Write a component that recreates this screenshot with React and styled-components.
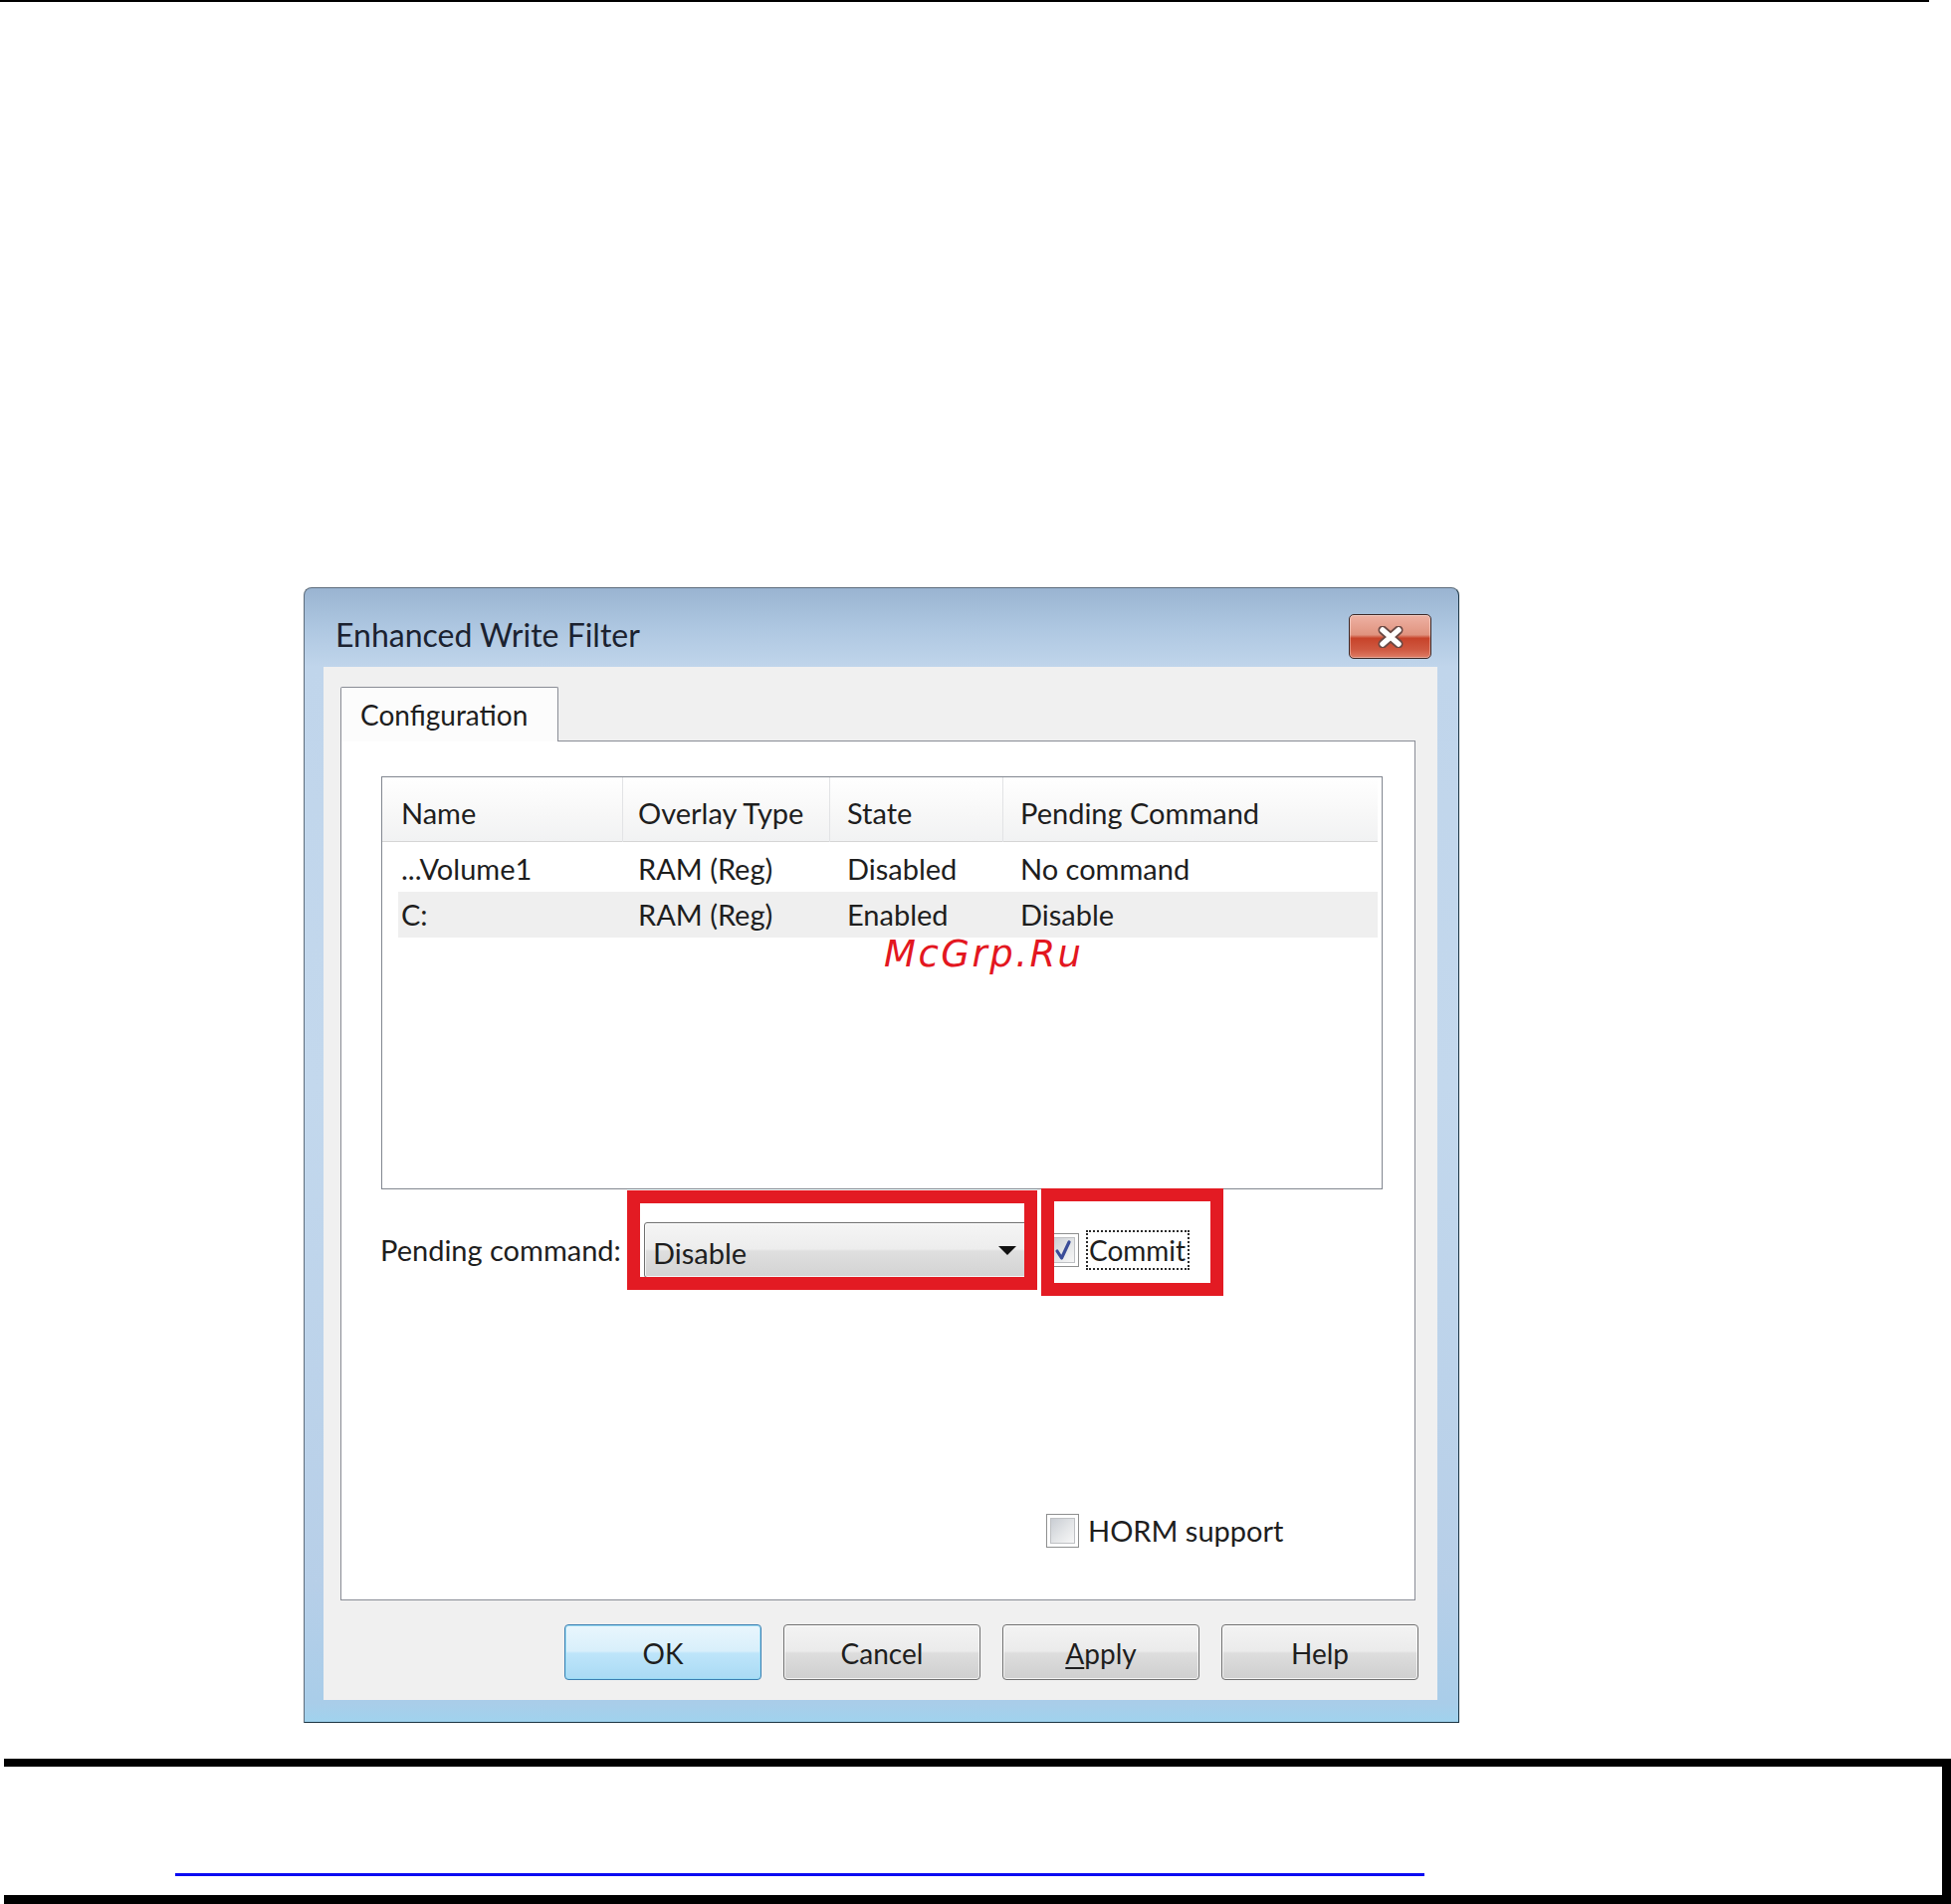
import React from "react";
import styled, { createGlobalStyle } from "styled-components";

const GlobalStyle = createGlobalStyle`
  html, body { margin: 0; padding: 0; background: #ffffff; }
  body { font-family: Lato, "Noto Sans", sans-serif; }
  #root { width: 1960px; height: 1913px; overflow: hidden; }
`;

const Page = styled.div`
  width: 1960px;
  height: 1913px;
  overflow: hidden;
  background: #fff;
`;

const TopRule = styled.div`
  width: 1938px;
  height: 2px;
  background: #000;
`;

const Window = styled.div`
  margin: 588px 0 0 305px;
  width: 1161px;
  height: 1141px;
  box-sizing: border-box;
  display: flex;
  flex-direction: column;
  padding: 0 21px 22px 19px;
  border: 1px solid;
  border-color: #5e6d7c #1a3342 #1a3342 #5e6d7c;
  border-radius: 8px 8px 0 0;
  background: linear-gradient(
    180deg,
    #9ab4d1 0px,
    #aec7e1 40px,
    #c0d5eb 79px,
    #c3d8ed 500px,
    #b7cfe8 1000px,
    #a9cde9 1120px,
    #9fd3ee 1141px
  );
`;

const TitleBar = styled.div`
  flex: none;
  display: flex;
  align-items: flex-start;
  height: 79px;
  margin: 0 -21px 0 -19px;
  padding: 0 27px 0 31px;
`;

const Title = styled.div`
  margin-top: 31px;
  font-size: 32px;
  line-height: 32px;
  color: #1b2230;
  white-space: nowrap;
`;

const CloseButton = styled.div`
  margin-left: auto;
  margin-top: 26px;
  width: 83px;
  height: 45px;
  box-sizing: border-box;
  border: 1px solid #3d2826;
  border-radius: 5px;
  background: linear-gradient(
    180deg,
    #eeb2a4 0%,
    #e0937f 46%,
    #c7432a 54%,
    #cf5840 80%,
    #df7d66 100%
  );
  box-shadow: inset 0 0 0 1px rgba(255, 255, 255, 0.35);
  display: flex;
  align-items: center;
  justify-content: center;
`;

const Content = styled.div`
  flex: 1;
  background: #f0f0f0;
  display: flex;
  flex-direction: column;
  padding: 20px 22px 20px 17px;
  box-sizing: border-box;
`;

const TabStrip = styled.div`
  flex: none;
  display: flex;
  position: relative;
  z-index: 1;
  margin-bottom: -1px;
`;

const Tab = styled.div`
  width: 219px;
  height: 55px;
  box-sizing: border-box;
  border: 1px solid #898c95;
  border-bottom: none;
  border-radius: 2px 2px 0 0;
  background: #fcfcfc;
  padding: 13px 0 0 19px;
  font-size: 28px;
  line-height: 28px;
  color: #1e1e1e;
  white-space: nowrap;
`;

const Panel = styled.div`
  position: relative;
  flex: none;
  height: 864px;
  box-sizing: border-box;
  border: 1px solid #898c95;
  background: #fff;
  display: flex;
  flex-direction: column;
  padding: 35px 32px 0 40px;
`;

const ListView = styled.div`
  position: relative;
  flex: none;
  height: 415px;
  box-sizing: border-box;
  border: 1px solid #828790;
  background: #fff;
  padding-right: 4px;
`;

const Header = styled.div`
  display: grid;
  grid-template-columns: 242px 208px 174px 1fr;
  height: 65px;
  box-sizing: border-box;
  background: linear-gradient(180deg, #ffffff 0%, #f7f7f7 60%, #f1f2f3 100%);
  border-bottom: 1px solid #d5d5d5;
`;

const HeaderCell = styled.div`
  box-sizing: border-box;
  padding: 6px 0 0 ${(p) => p.$pad}px;
  font-size: 29px;
  line-height: 59px;
  color: #1e1e1e;
  white-space: nowrap;
  border-right: ${(p) => (p.$last ? "none" : "1px solid #e2e3e5")};
`;

const Rows = styled.div`
  margin-top: 4px;
`;

const Row = styled.div`
  display: grid;
  grid-template-columns: 226px 208px 174px 1fr;
  margin-left: 16px;
  height: 46px;
  background: ${(p) => (p.$alt ? "#efefef" : "transparent")};
`;

const Cell = styled.div`
  padding-left: ${(p) => p.$pad}px;
  font-size: 29px;
  line-height: 46px;
  color: #1e1e1e;
  white-space: nowrap;
`;

const Watermark = styled.div`
  position: absolute;
  left: 504px;
  top: 159px;
  font-family: "DejaVu Sans", sans-serif;
  font-style: italic;
  font-size: 37px;
  line-height: 37px;
  letter-spacing: 2.5px;
  color: #e3171f;
  white-space: nowrap;
`;

const FormRow = styled.div`
  position: relative;
  flex: none;
  display: flex;
  align-items: center;
  height: 56px;
  margin: 33px 0 0 -1px;
`;

const Label = styled.div`
  width: 265px;
  flex: none;
  font-size: 29px;
  line-height: 56px;
  color: #1e1e1e;
  white-space: nowrap;
`;

const Combo = styled.div`
  width: 386px;
  height: 56px;
  flex: none;
  box-sizing: border-box;
  border: 1px solid #707070;
  border-radius: 3px;
  background: linear-gradient(
    180deg,
    #f5f5f5 0%,
    #ededed 48%,
    #dfdfdf 52%,
    #d3d3d3 100%
  );
  box-shadow: inset 0 0 0 1px rgba(255, 255, 255, 0.8);
  display: flex;
  align-items: center;
  padding: 5px 11px 0 8px;
  font-size: 29px;
  color: #1e1e1e;
`;

const ComboArrow = styled.svg`
  margin-left: auto;
  margin-top: -5px;
  flex: none;
`;

const CheckBox = styled.div`
  width: 33px;
  height: 34px;
  flex: none;
  margin-left: ${(p) => p.$ml || 0}px;
  box-sizing: border-box;
  border: 1px solid #8e8f8f;
  background: #fff;
  padding: 3px;
  display: flex;
`;

const CheckInner = styled.div`
  flex: 1;
  border: 1px solid #bfc1c4;
  background: linear-gradient(135deg, #c9cdd3 0%, #e4e6e8 55%, #f7f7f7 100%);
  display: flex;
  align-items: center;
  justify-content: center;
`;

const FocusLabel = styled.div`
  margin-left: 7px;
  height: 40px;
  box-sizing: border-box;
  border: 2px dotted #2a2a2a;
  padding: 0 2px 0 1px;
  display: flex;
  align-items: center;
  font-size: 28px;
  color: #1e1e1e;
  white-space: nowrap;
`;

const Highlight = styled.div`
  position: absolute;
  left: ${(p) => p.$left}px;
  top: ${(p) => p.$top}px;
  width: ${(p) => p.$w}px;
  height: ${(p) => p.$h}px;
  box-sizing: border-box;
  border: 13px solid #e31b23;
  z-index: 2;
  pointer-events: none;
`;

const HormRow = styled.div`
  flex: none;
  display: flex;
  align-items: center;
  margin: auto 0 52px 668px;
`;

const CheckText = styled.div`
  margin-left: 9px;
  font-size: 29px;
  color: #1e1e1e;
  white-space: nowrap;
`;

const ButtonRow = styled.div`
  flex: none;
  display: flex;
  justify-content: flex-end;
  gap: 22px;
  margin: 24px -3px 0 0;
`;

const Button = styled.div`
  width: 198px;
  height: 56px;
  box-sizing: border-box;
  border: 1px solid ${(p) => (p.$default ? "#3c7fb1" : "#707070")};
  border-radius: 4px;
  background: ${(p) =>
    p.$default
      ? "linear-gradient(180deg, #e9f6fd 0%, #d8effb 48%, #bee5fa 52%, #a9daf4 100%)"
      : "linear-gradient(180deg, #f3f3f3 0%, #ebebeb 48%, #dddddd 52%, #cfcfcf 100%)"};
  box-shadow: ${(p) =>
    p.$default
      ? "inset 0 0 0 1px rgba(150, 220, 245, 0.9)"
      : "inset 0 0 0 1px rgba(255, 255, 255, 0.75)"};
  display: flex;
  align-items: center;
  justify-content: center;
  padding-top: 2px;
  font-size: 28px;
  color: #1e1e1e;
`;

const AccessKey = styled.span`
  text-decoration: underline;
  text-underline-offset: 3px;
`;

const BottomFrame = styled.div`
  margin: 36px 0 0 4px;
  width: 1956px;
  height: 146px;
  box-sizing: border-box;
  border-top: 8px solid #000;
  border-right: 9px solid #000;
  border-bottom: 9px solid #000;
  padding: 107px 0 0 172px;
`;

const LinkLine = styled.div`
  width: 1255px;
  height: 3px;
  background: #0a0af2;
`;

const CloseGlyph = () => (
  <svg width="28" height="22" viewBox="0 0 28 22">
    <path
      d="M6 4 L22 18 M22 4 L6 18"
      stroke="#6b4a45"
      strokeWidth="9"
      strokeLinecap="round"
      fill="none"
    />
    <path
      d="M6 4 L22 18 M22 4 L6 18"
      stroke="#ffffff"
      strokeWidth="5.5"
      strokeLinecap="round"
      fill="none"
    />
  </svg>
);

const CheckMark = () => (
  <svg width="20" height="22" viewBox="0 0 20 22">
    <path
      d="M4 12 L8.5 19 L16 3"
      stroke="#3a4c98"
      strokeWidth="3.2"
      strokeLinecap="round"
      strokeLinejoin="round"
      fill="none"
    />
  </svg>
);

const columns = [
  { label: "Name", pad: 19 },
  { label: "Overlay Type", pad: 15 },
  { label: "State", pad: 17 },
  { label: "Pending Command", pad: 17 },
];

const rows = [
  ["...Volume1", "RAM (Reg)", "Disabled", "No command"],
  ["C:", "RAM (Reg)", "Enabled", "Disable"],
];

const cellPads = [3, 15, 17, 17];

export default function App() {
  return (
    <Page>
      <GlobalStyle />
      <TopRule />
      <Window>
        <TitleBar>
          <Title>Enhanced Write Filter</Title>
          <CloseButton>
            <CloseGlyph />
          </CloseButton>
        </TitleBar>
        <Content>
          <TabStrip>
            <Tab>Configuration</Tab>
          </TabStrip>
          <Panel>
            <ListView>
              <Header>
                {columns.map((c, i) => (
                  <HeaderCell key={c.label} $pad={c.pad} $last={i === columns.length - 1}>
                    {c.label}
                  </HeaderCell>
                ))}
              </Header>
              <Rows>
                {rows.map((r, ri) => (
                  <Row key={ri} $alt={ri === 1}>
                    {r.map((v, ci) => (
                      <Cell key={ci} $pad={cellPads[ci]}>
                        {v}
                      </Cell>
                    ))}
                  </Row>
                ))}
              </Rows>
              <Watermark>McGrp.Ru</Watermark>
            </ListView>
            <FormRow>
              <Label>Pending command:</Label>
              <Combo>
                Disable
                <ComboArrow width="18" height="9" viewBox="0 0 18 9">
                  <polygon points="0,0 18,0 9,9" fill="#111" />
                </ComboArrow>
              </Combo>
              <CheckBox $ml={18}>
                <CheckInner>
                  <CheckMark />
                </CheckInner>
              </CheckBox>
              <FocusLabel>Commit</FocusLabel>
              <Highlight $left={248} $top={-32} $w={412} $h={100} />
              <Highlight $left={664} $top={-34} $w={183} $h={108} />
            </FormRow>
            <HormRow>
              <CheckBox>
                <CheckInner />
              </CheckBox>
              <CheckText>HORM support</CheckText>
            </HormRow>
          </Panel>
          <ButtonRow>
            <Button $default>OK</Button>
            <Button>Cancel</Button>
            <Button>
              <AccessKey>A</AccessKey>pply
            </Button>
            <Button>Help</Button>
          </ButtonRow>
        </Content>
      </Window>
      <BottomFrame>
        <LinkLine />
      </BottomFrame>
    </Page>
  );
}
